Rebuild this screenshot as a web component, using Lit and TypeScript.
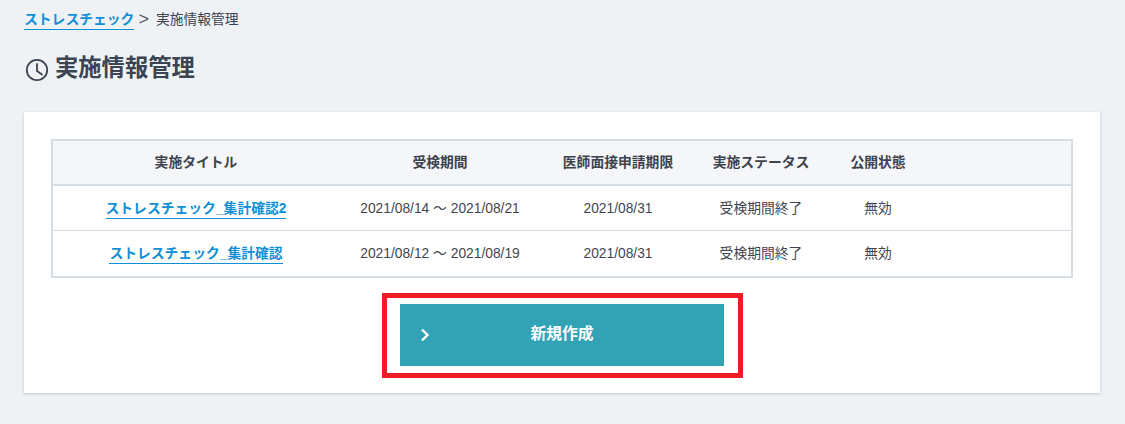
import { LitElement, html, css } from "lit";
import { customElement } from "lit/decorators.js";

const rows = [
  { title: "ストレスチェック_集計確認2", period: "2021/08/14 ～ 2021/08/21", deadline: "2021/08/31", status: "受検期間終了", pub: "無効" },
  { title: "ストレスチェック_集計確認", period: "2021/08/12 ～ 2021/08/19", deadline: "2021/08/31", status: "受検期間終了", pub: "無効" },
];

@customElement("app-root")
export class AppRoot extends LitElement {
  static styles = css`
    :host {
      display: block;
      height: 424px;
      overflow: hidden;
      background: #eff2f5;
      color: #3b4350;
      font-family: "Liberation Sans", "Noto Sans CJK JP", sans-serif;
      padding: 0 24px 0 24px;
      box-sizing: border-box;
    }
    .crumbs {
      display: flex;
      align-items: flex-start;
      height: 38px;
      padding-top: 10px;
      box-sizing: border-box;
      font-size: 13.8px;
      line-height: 19px;
    }
    .crumbs a {
      color: #0f8fd6;
      font-weight: 700;
      line-height: 19px;
      height: 19px;
      border-bottom: 1px solid #0f8fd6;
      text-decoration: none;
    }
    .crumbs .sep { margin: 0 7px 0 4px; font-size: 18px; font-weight: 400; color: #555d69; line-height: 19px; }
    .heading {
      display: flex;
      align-items: center;
      gap: 6px;
      height: 60px;
      margin: 0;
      padding-left: 1px;
      font-size: 23.3px;
      font-weight: 700;
      color: #3a4452;
    }
    .heading svg { width: 24px; height: 24px; margin-top: 4px; flex: none; }
    .heading span { position: relative; top: -2px; }
    .card {
      margin-top: 14px;
      width: 1076px;
      height: 281px;
      background: #fff;
      box-shadow: 0 1px 3px rgba(60, 70, 90, 0.25);
      padding: 27px 27px 0;
      box-sizing: border-box;
    }
    table {
      width: 1022px;
      border-collapse: separate;
      border-spacing: 0;
      table-layout: fixed;
      border: 2px solid #d6dde5;
      font-size: 13.8px;
      line-height: 20px;
    }
    th {
      box-sizing: border-box;
      height: 45px;
      padding: 0;
      background: #f4f6f9;
      border-bottom: 2px solid #d6dde5;
      font-weight: 700;
      color: #3d434d;
      text-align: center;
    }
    td {
      box-sizing: border-box;
      height: 45px;
      padding: 1px 0 0;
      text-align: center;
      color: #3f4650;
      border-bottom: 1px solid #d6dde5;
    }
    td.title { padding: 1px 0 0; }
    tr:last-child td { border-bottom: none; height: 45px; }
    tr:last-child td.title { padding: 0; }
    td a {
      color: #0f8fd6;
      font-weight: 700;
      text-decoration: none;
      border-bottom: 1px solid #0f8fd6;
      line-height: 18px;
      display: inline-block;
    }
    .actions {
      display: flex;
      justify-content: center;
      margin-top: 26px;
    }
    .btn {
      position: relative;
      display: flex;
      align-items: center;
      justify-content: center;
      width: 324px;
      height: 62px;
      padding: 0 0 6px;
      background: #32a2b5;
      color: #fff;
      font-size: 15.8px;
      font-weight: 700;
      font-family: inherit;
      border: none;
    }
    .btn svg { position: absolute; left: 19px; top: 24px; width: 12px; height: 14px; }
    .mark {
      position: absolute;
      inset: -11px -19px -12px -18px;
      border: 5px solid #ee1c25;
      pointer-events: none;
    }
  `;

  render() {
    return html`
      <nav class="crumbs">
        <a href="#">ストレスチェック</a><span class="sep">&gt;</span><span>実施情報管理</span>
      </nav>
      <h1 class="heading">
        <svg viewBox="0 0 24 24" fill="none" stroke="#3a4452" stroke-width="1.8">
          <circle cx="12" cy="12" r="10.2"></circle>
          <path d="M12 6v7l5 3.5" stroke-linecap="round" stroke-linejoin="round"></path>
        </svg>
        <span>実施情報管理</span>
      </h1>
      <section class="card">
        <table>
          <colgroup>
            <col style="width:286px" /><col style="width:202px" /><col style="width:154px" /><col style="width:132px" /><col style="width:102px" /><col />
          </colgroup>
          <thead>
            <tr><th>実施タイトル</th><th>受検期間</th><th>医師面接申請期限</th><th>実施ステータス</th><th>公開状態</th><th></th></tr>
          </thead>
          <tbody>
            ${rows.map(
              (r) => html`<tr>
                <td class="title"><a href="#">${r.title}</a></td>
                <td>${r.period}</td>
                <td>${r.deadline}</td>
                <td>${r.status}</td>
                <td>${r.pub}</td>
                <td></td>
              </tr>`
            )}
          </tbody>
        </table>
        <div class="actions">
          <button class="btn">
            <svg viewBox="0 0 12 14" fill="none" stroke="#fff" stroke-width="2.4"><path d="M3 1.5 8.5 7 3 12.5"></path></svg>
            新規作成
            <span class="mark"></span>
          </button>
        </div>
      </section>
    `;
  }
}
